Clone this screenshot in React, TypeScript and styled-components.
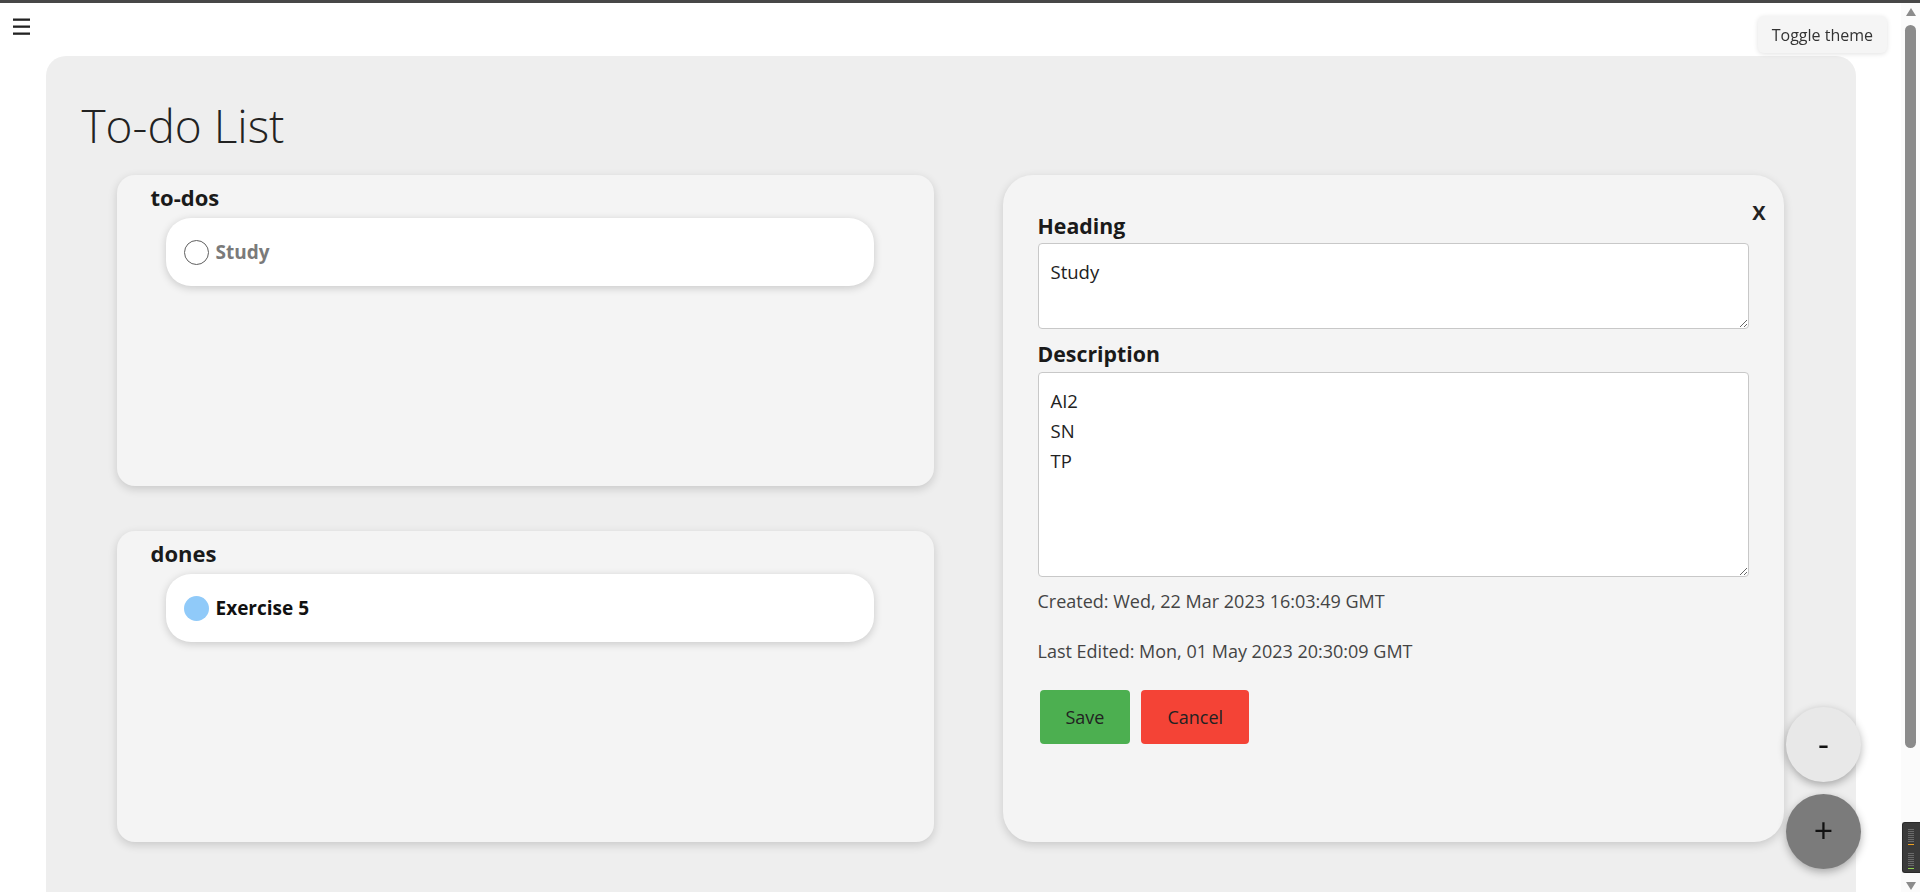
import React from "react";
import styled, { createGlobalStyle } from "styled-components";

const GlobalStyle = createGlobalStyle`
  html, body {
    margin: 0;
    padding: 0;
    overflow: hidden;
    background: #ffffff;
  }
  body {
    font-family: "Open Sans", "Noto Sans", "DejaVu Sans", sans-serif;
    color: #222222;
  }
  *, *::before, *::after { box-sizing: border-box; }
`;

const Page = styled.div`
  width: calc(100vw - 19px);
  height: 100vh;
  overflow: hidden;
`;

const WindowEdge = styled.div`
  position: fixed;
  top: 0;
  left: 0;
  right: 0;
  height: 3px;
  background: #474747;
  z-index: 20;
`;

const TopBar = styled.header`
  height: 56px;
  padding: 18px 0 0 13px;
`;

const MenuButton = styled.button`
  display: block;
  width: 17px;
  height: 17px;
  padding: 0;
  border: none;
  background: transparent;
  color: #222;
  cursor: pointer;
`;

const Board = styled.main`
  width: 1810px;
  min-height: 1000px;
  margin: 0 auto;
  padding: 39px 72px 40px 36px;
  background: #eeeeee;
  border-radius: 20px;
`;

const Title = styled.h1`
  margin: 0;
  font-size: 46px;
  line-height: 60px;
  font-weight: 300;
  color: #222;
`;

const Columns = styled.div`
  display: grid;
  grid-template-columns: 817px 781px;
  column-gap: 69px;
  margin: 20px 0 0 35px;
  align-items: start;
`;

const ListColumn = styled.div`
  display: flex;
  flex-direction: column;
  gap: 45px;
`;

const ListCard = styled.section`
  height: 311px;
  padding: 8px 0 0 34px;
  background: #f4f4f4;
  border-radius: 18px;
  box-shadow: 0 3px 10px rgba(0, 0, 0, 0.16);
`;

const ListTitle = styled.h2`
  margin: 0 0 7px;
  font-size: 22px;
  line-height: 28px;
  font-weight: 700;
  color: #1a1a1a;
`;

const TodoItem = styled.div`
  display: flex;
  align-items: center;
  gap: 7px;
  width: 708px;
  height: 68px;
  margin-left: 15px;
  padding-left: 18px;
  background: #ffffff;
  border-radius: 25px;
  box-shadow: 0 2px 8px rgba(0, 0, 0, 0.18);
`;

const Check = styled.span<{ $done: boolean }>`
  flex: none;
  width: 25px;
  height: 25px;
  border-radius: 50%;
  border: ${(p) => (p.$done ? "none" : "1px solid #5f5f5f")};
  background: ${(p) => (p.$done ? "#90caf9" : "#ffffff")};
`;

const ItemText = styled.span<{ $muted: boolean }>`
  font-size: 19px;
  font-weight: 700;
  color: ${(p) => (p.$muted ? "#7a7a7a" : "#111111")};
`;

const EditorCard = styled.section`
  position: relative;
  height: 667px;
  padding: 37px 35px 0;
  background: #f4f4f4;
  border-radius: 30px;
  box-shadow: 0 3px 10px rgba(0, 0, 0, 0.16);
`;

const CloseButton = styled.button`
  position: absolute;
  top: 25px;
  right: 18px;
  padding: 0;
  border: none;
  background: transparent;
  font-family: inherit;
  font-size: 20px;
  line-height: 26px;
  font-weight: 700;
  color: #222;
  cursor: pointer;
`;

const FieldLabel = styled.label<{ $gap: number }>`
  display: block;
  margin-top: ${(p) => p.$gap}px;
  font-size: 21.3px;
  line-height: 28px;
  font-weight: 700;
  color: #1a1a1a;
`;

const TextBox = styled.textarea<{ $h: number }>`
  display: block;
  width: 100%;
  height: ${(p) => p.$h}px;
  margin-top: ${(p) => (p.$h > 100 ? 4 : 3)}px;
  padding: 13px 12px;
  border: 1px solid #c8c8c8;
  border-radius: 4px;
  background: #ffffff;
  font-family: inherit;
  font-size: 18.5px;
  line-height: 30px;
  color: #222;
  outline: none;
  resize: both;
`;

const Meta = styled.p<{ $gap: number }>`
  margin: ${(p) => p.$gap}px 0 0;
  font-size: 18px;
  line-height: 24px;
  color: #444;
`;

const Actions = styled.div`
  display: flex;
  gap: 11px;
  margin-top: 27px;
  padding-left: 2px;
`;

const ActionButton = styled.button<{ $tone: "save" | "cancel" }>`
  height: 54px;
  padding: 0 26px;
  border: none;
  border-radius: 4px;
  background: ${(p) => (p.$tone === "save" ? "#4caf50" : "#f44336")};
  font-family: inherit;
  font-size: 18px;
  color: #222;
  cursor: pointer;
`;

const Tooltip = styled.div`
  position: fixed;
  top: 16px;
  right: 33px;
  height: 37px;
  padding: 0 14px;
  display: flex;
  align-items: center;
  background: #f5f5f5;
  border-radius: 6px;
  box-shadow: 0 1px 5px rgba(0, 0, 0, 0.12);
  font-size: 16px;
  color: #333;
  z-index: 5;
`;

const FabStack = styled.div`
  position: fixed;
  right: 59px;
  bottom: 23px;
  display: flex;
  flex-direction: column;
  gap: 12px;
  z-index: 5;
`;

const Fab = styled.button<{ $dark: boolean }>`
  width: 75px;
  height: 75px;
  padding: 0 0 4px;
  border: none;
  border-radius: 50%;
  background: ${(p) => (p.$dark ? "#7b7b7b" : "#e8e8e8")};
  box-shadow: 0 3px 8px rgba(0, 0, 0, 0.3);
  font-family: inherit;
  font-size: 34px;
  line-height: 1;
  color: #111;
  cursor: pointer;
`;

const ScrollTrack = styled.div`
  position: fixed;
  top: 0;
  right: 0;
  bottom: 0;
  width: 19px;
  background: #fbfbfb;
  display: flex;
  flex-direction: column;
  align-items: center;
  padding-top: 8px;
  z-index: 10;
`;

const Arrow = styled.span<{ $down?: boolean }>`
  width: 0;
  height: 0;
  border-left: 5.5px solid transparent;
  border-right: 5.5px solid transparent;
  ${(p) =>
    p.$down
      ? "border-top: 8px solid #8b8b8b; margin-top: auto; margin-bottom: 2px;"
      : "border-bottom: 8px solid #8b8b8b;"}
`;

const Thumb = styled.div`
  width: 11px;
  height: 723px;
  margin-top: 9px;
  border-radius: 6px;
  background: #8b8b8b;
`;

const Meter = styled.div`
  position: fixed;
  right: 0;
  top: 822px;
  width: 18px;
  height: 51px;
  padding: 6px 0 0 5px;
  background: #3b3b3b;
  border: 1px solid #2a2a2a;
  border-right: none;
  border-radius: 3px 0 0 3px;
  display: flex;
  flex-direction: column;
  gap: 8px;
  z-index: 15;
`;

const MeterGroup = styled.div<{ $accent: string }>`
  width: 6px;
  height: 16px;
  background:
    linear-gradient(${(p) => p.$accent}, ${(p) => p.$accent}) bottom / 100% 1px no-repeat,
    repeating-linear-gradient(to bottom, #6a6a6a 0 1px, transparent 1px 2px) top / 100% 13px no-repeat;
`;

const MenuIcon = () => (
  <svg width="17" height="17" viewBox="0 0 17 17" fill="currentColor">
    <rect x="0" y="0.5" width="17" height="2.3" />
    <rect x="0" y="7.5" width="17" height="2.3" />
    <rect x="0" y="14.5" width="17" height="2.3" />
  </svg>
);

const lists = [
  { title: "to-dos", items: [{ text: "Study", done: false, muted: true }] },
  { title: "dones", items: [{ text: "Exercise 5", done: true, muted: false }] },
];

export default function App() {
  return (
    <>
      <GlobalStyle />
      <WindowEdge />
      <Page>
        <TopBar>
          <MenuButton aria-label="Menu">
            <MenuIcon />
          </MenuButton>
        </TopBar>
        <Board>
          <Title>To-do List</Title>
          <Columns>
            <ListColumn>
              {lists.map((list) => (
                <ListCard key={list.title}>
                  <ListTitle>{list.title}</ListTitle>
                  {list.items.map((item) => (
                    <TodoItem key={item.text}>
                      <Check $done={item.done} />
                      <ItemText $muted={item.muted}>{item.text}</ItemText>
                    </TodoItem>
                  ))}
                </ListCard>
              ))}
            </ListColumn>
            <EditorCard>
              <CloseButton aria-label="Close">X</CloseButton>
              <FieldLabel $gap={0}>Heading</FieldLabel>
              <TextBox $h={86} defaultValue="Study" />
              <FieldLabel $gap={11}>Description</FieldLabel>
              <TextBox $h={205} defaultValue={"AI2\nSN\nTP"} />
              <Meta $gap={12}>Created: Wed, 22 Mar 2023 16:03:49 GMT</Meta>
              <Meta $gap={26}>Last Edited: Mon, 01 May 2023 20:30:09 GMT</Meta>
              <Actions>
                <ActionButton $tone="save">Save</ActionButton>
                <ActionButton $tone="cancel">Cancel</ActionButton>
              </Actions>
            </EditorCard>
          </Columns>
        </Board>
      </Page>
      <Tooltip>Toggle theme</Tooltip>
      <FabStack>
        <Fab $dark={false}>-</Fab>
        <Fab $dark={true}>+</Fab>
      </FabStack>
      <ScrollTrack>
        <Arrow />
        <Thumb />
        <Arrow $down />
      </ScrollTrack>
      <Meter>
        <MeterGroup $accent="#f0a020" />
        <MeterGroup $accent="#8fd14f" />
      </Meter>
    </>
  );
}
